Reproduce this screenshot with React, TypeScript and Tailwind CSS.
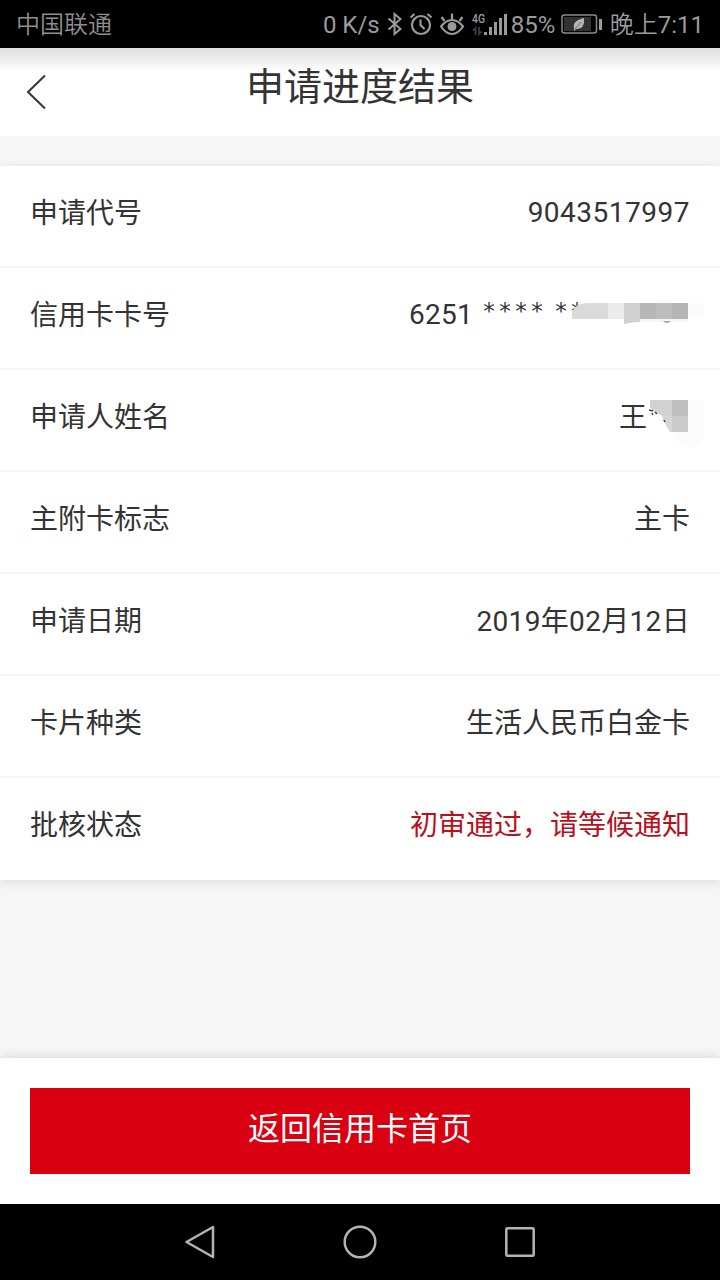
import type { ReactNode } from 'react';

type Row = { label: string; value: ReactNode; highlight?: boolean };

const rows: Row[] = [
  { label: '申请代号', value: <span className="block pb-[2px] tracking-[0.5px]">9043517997</span> },
  { label: '信用卡卡号', value: <MaskedCardNumber /> },
  { label: '申请人姓名', value: <MaskedName /> },
  { label: '主附卡标志', value: '主卡' },
  { label: '申请日期', value: <span className="tracking-[0.33px]">2019年02月12日</span> },
  { label: '卡片种类', value: '生活人民币白金卡' },
  { label: '批核状态', value: '初审通过，请等候通知', highlight: true },
];

export default function App() {
  return (
    <div className="flex h-[1280px] w-[720px] flex-col overflow-hidden bg-[#f6f6f6] font-[Roboto,'Noto_Sans_CJK_SC',sans-serif] text-[#333]">
      <StatusBar />
      <TitleBar />

      <main className="mt-[30px] bg-white shadow-[0_2px_10px_rgba(0,0,0,0.11)]">
        {rows.map((row) => (
          <div
            key={row.label}
            className="flex h-[102px] items-center justify-between border-b-2 border-[#f5f5f5] pr-[30px] pb-[5px] pl-[30px] text-[28px] leading-none last:border-b-0 last:pb-[7px]"
          >
            <span>{row.label}</span>
            <span className={row.highlight ? 'text-[#b8101c]' : ''}>{row.value}</span>
          </div>
        ))}
      </main>

      <footer className="mt-auto bg-white px-[30px] pt-[30px] pb-[30px] shadow-[0_-2px_10px_rgba(0,0,0,0.11)]">
        <button
          type="button"
          className="flex h-[86px] w-full items-center justify-center bg-[#d90012] pb-[5px] text-[32px] leading-none text-white"
        >
          返回信用卡首页
        </button>
      </footer>
      <NavBar />
    </div>
  );
}

function StatusBar() {
  return (
    <div className="flex h-12 shrink-0 items-center justify-between bg-black pr-[16px] pl-[16px] text-[24px] leading-none text-[#9b9b9b]">
      <span className="pt-[2px] font-[350] text-[#8f8f8f]">中国联通</span>
      <div className="flex items-center">
        <span className="mr-[6px] pt-[1px]">0 K/s</span>
        <BluetoothIcon />
        <AlarmIcon />
        <EyeIcon />
        <SignalIcon />
        <span className="ml-[3px] w-[44px] pt-[1px] whitespace-nowrap">85%</span>
        <BatteryIcon />
        <span className="ml-[7px] pt-[2px] font-[350]">
          晚上<span className="font-normal">7:11</span>
        </span>
      </div>
    </div>
  );
}

function TitleBar() {
  return (
    <header className="flex h-[88px] shrink-0 items-center bg-white bg-linear-to-b from-[#dedede] to-white to-[27%] px-[26px]">
      <svg width="22" height="36" viewBox="0 0 22 36" fill="none" className="shrink-0">
        <path d="M19 1.5 2 18l17 16.5" stroke="#333" strokeWidth="2" />
      </svg>
      <h1 className="flex-1 pr-[22px] pb-[11px] text-center text-[38px] leading-none">
        申请进度结果
      </h1>
    </header>
  );
}

function MaskedCardNumber() {
  return (
    <span className="relative flex w-[281px] items-center pb-[2px]">
      <span className="tracking-[0.3px]">6251</span>
      <span className="ml-[10px] pb-[6px] font-['DejaVu_Sans',sans-serif] text-[23px] leading-none tracking-[4.500px]">
        ****
      </span>
      <span className="ml-[8px] pb-[6px] font-['DejaVu_Sans',sans-serif] text-[23px] leading-none tracking-[4.500px]">
        **
      </span>
      <svg
        width="148"
        height="32"
        viewBox="0 0 148 32"
        className="absolute top-[-5px] left-[163px]"
      >
        <path d="M0 24V17Q3 9 14 8H36V24Z" fill="#dadada" />
        <path d="M36 8h16v16H36z" fill="#ebebeb" />
        <path d="M52 8h16v19q-8 0-16 2z" fill="#d0d0d0" />
        <path d="M68 24h48v3H68z" fill="#f5f5f5" />
        <path d="M68 8h16v16H68z" fill="#b7b7b7" />
        <path d="M84 8h16v16H84z" fill="#bebebe" />
        <path d="M100 8h16v16h-16z" fill="#b5b5b5" />
        <path d="M84 6q8-4 16-1v3H84z" fill="#fafafa" />
        <path d="M116 8h16v16h-16z" fill="#fbfbfb" />
        <path d="M91 26.500q4 2 8 0z" fill="#555" />
      </svg>
    </span>
  );
}

function MaskedName() {
  return (
    <span className="relative flex w-[71px]">
      王
      <svg
        width="60"
        height="52"
        viewBox="0 0 60 52"
        className="absolute top-[-7px] left-[27px]"
      >
        <path d="M42 4h16v31q-3 15-16 16-12-2-16-16h16z" fill="#fcfcfc" />
        <path d="M4 3H26V19H16Q13 16 8 15L4 10Z" fill="#d2d2d2" />
        <path d="M26 3h16v16H26z" fill="#bfbfbf" />
        <path d="M16 19H26V35H24Q20 29 17 22Z" fill="#d6d6d6" />
        <path d="M26 19h16v16H26z" fill="#cbcbcb" />
        <path d="m3 13 4 1M6 16l1 2M9 15l2 2M18 23l1 2" stroke="#444" strokeWidth="1.600" />
      </svg>
    </span>
  );
}

function BluetoothIcon() {
  return (
    <svg width="18" height="24" viewBox="0 0 18 24" fill="none" stroke="#9b9b9b" strokeWidth="2">
      <path d="m2.500 6.500 12 10.500-6 5V2l6 5-12 10.500" />
    </svg>
  );
}

function AlarmIcon() {
  return (
    <svg
      width="24"
      height="24"
      viewBox="0 0 24 24"
      fill="none"
      stroke="#9b9b9b"
      strokeWidth="2.200"
      className="ml-[5px]"
    >
      <circle cx="12" cy="13" r="9" />
      <path d="M11.500 7.500V13l4 4M1.500 5.500 5.500 2M18.500 2l4 3.500" />
    </svg>
  );
}

function EyeIcon() {
  return (
    <svg
      width="26"
      height="24"
      viewBox="0 0 26 24"
      fill="none"
      stroke="#9b9b9b"
      strokeWidth="2.200"
      className="ml-[6px]"
    >
      <path d="M2 14.500Q7 8 13 8t11 6.500q-5 7.500-11 7.500T2 14.500Z" />
      <path d="M13 8V1.500M5.500 9 2.500 5M20.500 9l3-4" />
      <circle cx="13" cy="14.500" r="4.500" fill="#9b9b9b" stroke="none" />
    </svg>
  );
}

function SignalIcon() {
  return (
    <svg width="37" height="24" viewBox="0 0 37 24" fill="#9b9b9b" className="ml-[6px]">
      <text
        x="1"
        y="11"
        fontFamily="Roboto"
        fontSize="13"
        fontWeight="500"
        textLength="13"
        lengthAdjust="spacingAndGlyphs"
      >
        4G
      </text>
      <path d="M13 20h3v3h-3zM18 15h3v8h-3zM23 10h3v13h-3zM28 6h3v17h-3zM33 2h3v21h-3z" />
      <path
        d="M4.500 23v-7L2 18.500M8 15v7l2.500-2.500"
        fill="none"
        stroke="#3d3d3d"
        strokeWidth="1.800"
      />
    </svg>
  );
}

function BatteryIcon() {
  return (
    <svg width="42" height="20" viewBox="0 0 42 20" className="ml-[6px]">
      <rect x="1" y="1" width="34.500" height="18" rx="2.500" fill="none" stroke="#8a8a8a" strokeWidth="1.500" />
      <path d="M3 3h27v14H3z" fill="#333" />
      <path d="M38 5h3v11h-3z" fill="#9b9b9b" />
      <path d="M23 4q1 12-8 11l-2 2v-3q-2-7 10-10Z" fill="#b5b5b5" />
      <path d="m14 15 6-7" stroke="#555" strokeWidth=".8" />
    </svg>
  );
}

function NavBar() {
  return (
    <nav className="flex h-[76px] shrink-0 items-center justify-center gap-[126px] bg-black">
      {/* back */}
      <svg width="34" height="36" viewBox="0 0 34 36" fill="none" stroke="#b4b4b4" strokeWidth="2.500">
        <path d="M30 3v30L3.500 18Z" strokeLinejoin="round" />
      </svg>
      {/* home */}
      <svg width="34" height="34" viewBox="0 0 34 34" fill="none" stroke="#b4b4b4" strokeWidth="2.500">
        <circle cx="17" cy="17" r="15.300" />
      </svg>
      {/* recents */}
      <svg width="34" height="34" viewBox="0 0 34 34" fill="none" stroke="#b4b4b4" strokeWidth="2.500">
        <rect x="3.300" y="3.300" width="27.400" height="27.400" rx="1" />
      </svg>
    </nav>
  );
}
